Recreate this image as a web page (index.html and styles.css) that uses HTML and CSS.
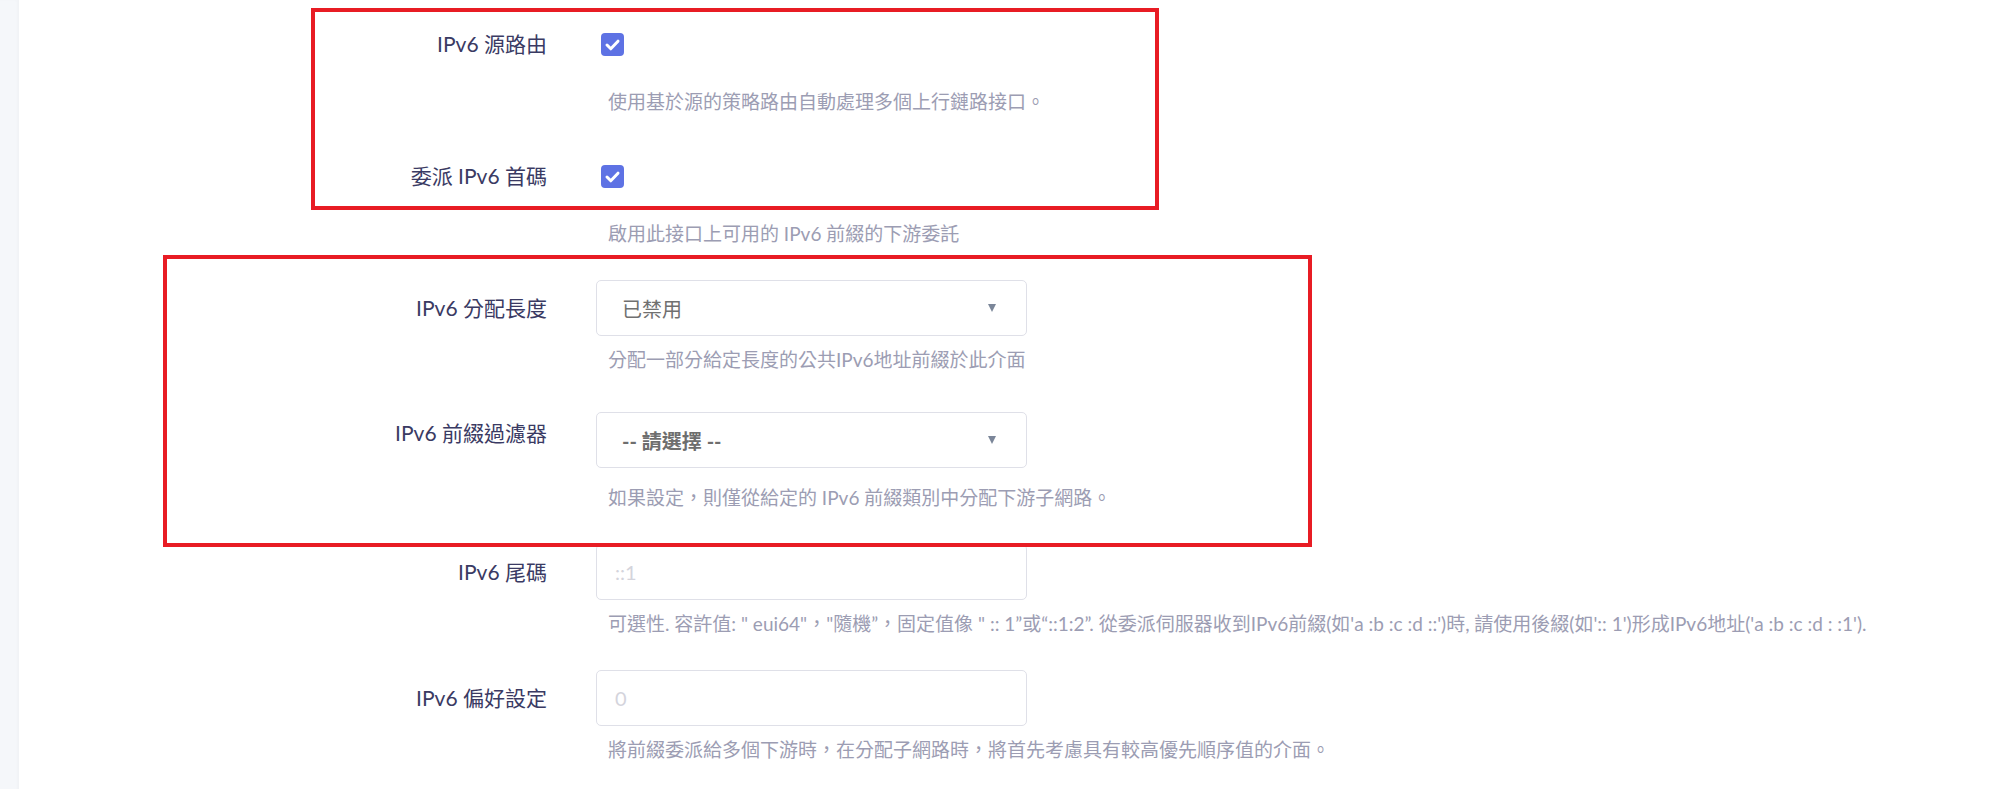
FILE: index.html
```html
<!DOCTYPE html>
<html>
<head>
    <title>IPv6 設定</title>
    <link rel="stylesheet" href="styles.css">
</head>
<body>
    <div class="page">
        <aside class="rail"></aside>

        <main class="form">
            <div class="row row-check">
                <label class="label">IPv6 源路由</label>
                <div class="field">
                    <div class="control">
                        <span class="checkbox">
                            <svg width="23" height="23" viewBox="0 0 23 23"><rect width="23" height="23" rx="4" fill="#5e72e4"/><path d="M6 12l3.8 3.8 7.2-7.6" fill="none" stroke="#fff" stroke-width="3" stroke-linecap="round" stroke-linejoin="round"/></svg>
                        </span>
                    </div>
                    <div class="desc">使用基於源的策略路由自動處理多個上行鏈路接口。</div>
                </div>
            </div>

            <div class="row row-check">
                <label class="label">委派 IPv6 首碼</label>
                <div class="field">
                    <div class="control">
                        <span class="checkbox">
                            <svg width="23" height="23" viewBox="0 0 23 23"><rect width="23" height="23" rx="4" fill="#5e72e4"/><path d="M6 12l3.8 3.8 7.2-7.6" fill="none" stroke="#fff" stroke-width="3" stroke-linecap="round" stroke-linejoin="round"/></svg>
                        </span>
                    </div>
                    <div class="desc">啟用此接口上可用的 IPv6 前綴的下游委託</div>
                </div>
            </div>

            <div class="row row-select">
                <label class="label">IPv6 分配長度</label>
                <div class="field">
                    <div class="control">
                        <div class="select">
                            <span>已禁用</span>
                            <span class="caret"></span>
                        </div>
                    </div>
                    <div class="desc">分配一部分給定長度的公共IPv6地址前綴於此介面</div>
                </div>
            </div>

            <div class="row row-dropdown">
                <label class="label">IPv6 前綴過濾器</label>
                <div class="field">
                    <div class="control">
                        <div class="select">
                            <span class="choose">-- 請選擇 --</span>
                            <span class="caret"></span>
                        </div>
                    </div>
                    <div class="desc">如果設定，則僅從給定的 IPv6 前綴類別中分配下游子網路。</div>
                </div>
            </div>

            <div class="row">
                <label class="label">IPv6 尾碼</label>
                <div class="field">
                    <div class="control">
                        <input class="text-input" type="text" placeholder="::1">
                    </div>
                    <div class="desc">可選性. 容許值: " eui64"，"隨機”，固定值像 " :: 1”或“::1:2”. 從委派伺服器收到IPv6前綴(如'a :b :c :d ::')時, 請使用後綴(如':: 1')形成IPv6地址('a :b :c :d : :1').</div>
                </div>
            </div>

            <div class="row">
                <label class="label">IPv6 偏好設定</label>
                <div class="field">
                    <div class="control">
                        <input class="text-input" type="text" placeholder="0">
                    </div>
                    <div class="desc">將前綴委派給多個下游時，在分配子網路時，將首先考慮具有較高優先順序值的介面。</div>
                </div>
            </div>
        </main>
    </div>

    <!-- annotation frames drawn over the form -->
    <div class="mark mark-1"></div>
    <div class="mark mark-2"></div>
</body>
</html>
```

FILE: styles.css
```css
body {
    margin: 0;
    font-family: Lato, "Noto Sans CJK TC", sans-serif;
    background: white;
    overflow: hidden;
}
.page {
    display: flex;
    min-height: 789px;
}
.rail {
    flex: 0 0 19px;
    background: #f5f7fa;
    box-shadow: inset -2px 0 3px rgba(0, 0, 0, 0.02);
}
.form {
    flex: 1;
    padding-top: 16px;
}
.row {
    display: flex;
    margin-bottom: 32px;
}
.row-select {
    margin-bottom: 38px;
}
.label {
    flex: 0 0 528px;
    height: 56px;
    display: flex;
    align-items: center;
    justify-content: flex-end;
    font-size: 21px;
    line-height: 28px;
    color: #3a3a63;
}
.row-dropdown .label {
    align-items: flex-start;
    padding-top: 7px;
    box-sizing: border-box;
}
.field {
    margin-left: 49px;
}
.control {
    width: 431px;
    height: 56px;
    display: flex;
    align-items: center;
}
.checkbox {
    display: flex;
    margin-left: 5px;
}
.select {
    box-sizing: border-box;
    width: 100%;
    height: 56px;
    display: flex;
    align-items: center;
    justify-content: space-between;
    padding: 0 30px 0 25px;
    border: 1px solid #dfe0e8;
    border-radius: 5px;
    font-size: 20px;
    color: #707070;
}
.choose {
    font-weight: bold;
    color: #6e6e6e;
}
.caret {
    width: 0;
    height: 0;
    border-left: 4.5px solid transparent;
    border-right: 4.5px solid transparent;
    border-top: 8px solid #7b8699;
}
.text-input {
    box-sizing: border-box;
    width: 100%;
    height: 56px;
    padding: 0 18px;
    border: 1px solid #dfe0e8;
    border-radius: 5px;
    font-family: Lato, "Noto Sans CJK TC", sans-serif;
    font-size: 20px;
    color: #555;
    outline: none;
}
.text-input::placeholder {
    color: #d4d4dc;
}
.desc {
    margin-top: 10px;
    padding-left: 12px;
    font-size: 19px;
    line-height: 28px;
    color: #9c9db3;
    white-space: nowrap;
}
.row-check .desc,
.row-dropdown .desc {
    margin-top: 16px;
}
.mark {
    position: absolute;
    box-sizing: border-box;
    border: 4px solid #e81c24;
}
.mark-1 {
    left: 311px;
    top: 8px;
    width: 848px;
    height: 202px;
}
.mark-2 {
    left: 163px;
    top: 255px;
    width: 1149px;
    height: 292px;
}
```
